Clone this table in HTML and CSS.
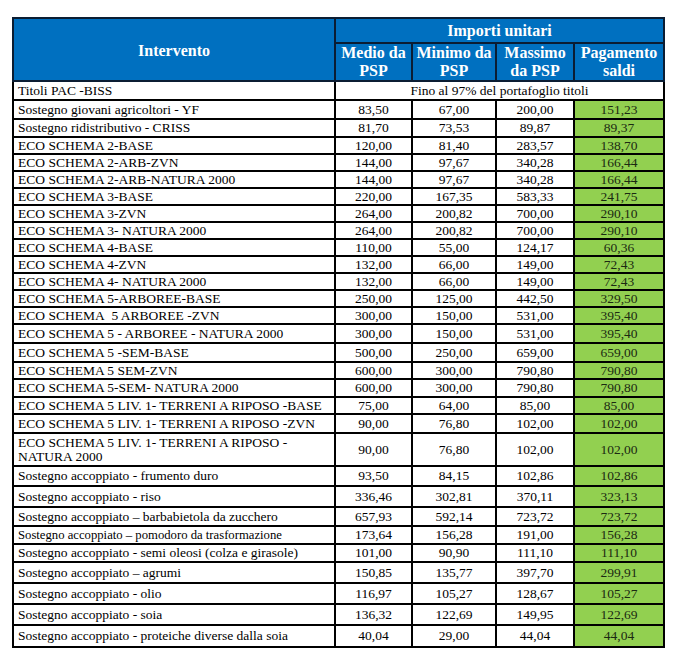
FILE: index.html
```html
<!DOCTYPE html>
<html lang="it">
<head>
<meta charset="utf-8">
<title>Importi unitari</title>
<link rel="stylesheet" href="styles.css">
</head>
<body>
<div class="page">
<table class="tbl">
  <colgroup>
    <col class="c-int"><col class="c-med"><col class="c-min"><col class="c-max"><col class="c-pag">
  </colgroup>
  <thead>
    <tr class="h-top">
      <th rowspan="2" class="th-int">Intervento</th>
      <th colspan="4">Importi unitari</th>
    </tr>
    <tr class="h-sub">
      <th>Medio da<br>PSP</th>
      <th>Minimo da<br>PSP</th>
      <th>Massimo<br>da PSP</th>
      <th>Pagamento<br>saldi</th>
    </tr>
  </thead>
  <tbody>
    <tr class="r19"><td class="name">Titoli PAC -BISS</td><td colspan="4" class="num">Fino al 97% del portafoglio titoli</td></tr>
    <tr class="r19"><td class="name">Sostegno giovani agricoltori - YF</td><td class="num">83,50</td><td class="num">67,00</td><td class="num">200,00</td><td class="pay">151,23</td></tr>
    <tr class="r18"><td class="name">Sostegno ridistributivo - CRISS</td><td class="num">81,70</td><td class="num">73,53</td><td class="num">89,87</td><td class="pay">89,37</td></tr>
    <tr class="r17"><td class="name">ECO SCHEMA 2-BASE</td><td class="num">120,00</td><td class="num">81,40</td><td class="num">283,57</td><td class="pay">138,70</td></tr>
    <tr class="r17"><td class="name">ECO SCHEMA 2-ARB-ZVN</td><td class="num">144,00</td><td class="num">97,67</td><td class="num">340,28</td><td class="pay">166,44</td></tr>
    <tr class="r17"><td class="name">ECO SCHEMA 2-ARB-NATURA 2000</td><td class="num">144,00</td><td class="num">97,67</td><td class="num">340,28</td><td class="pay">166,44</td></tr>
    <tr class="r17"><td class="name">ECO SCHEMA 3-BASE</td><td class="num">220,00</td><td class="num">167,35</td><td class="num">583,33</td><td class="pay">241,75</td></tr>
    <tr class="r17"><td class="name">ECO SCHEMA 3-ZVN</td><td class="num">264,00</td><td class="num">200,82</td><td class="num">700,00</td><td class="pay">290,10</td></tr>
    <tr class="r17"><td class="name">ECO SCHEMA 3- NATURA 2000</td><td class="num">264,00</td><td class="num">200,82</td><td class="num">700,00</td><td class="pay">290,10</td></tr>
    <tr class="r17"><td class="name">ECO SCHEMA 4-BASE</td><td class="num">110,00</td><td class="num">55,00</td><td class="num">124,17</td><td class="pay">60,36</td></tr>
    <tr class="r17"><td class="name">ECO SCHEMA 4-ZVN</td><td class="num">132,00</td><td class="num">66,00</td><td class="num">149,00</td><td class="pay">72,43</td></tr>
    <tr class="r17"><td class="name">ECO SCHEMA 4- NATURA 2000</td><td class="num">132,00</td><td class="num">66,00</td><td class="num">149,00</td><td class="pay">72,43</td></tr>
    <tr class="r17"><td class="name">ECO SCHEMA 5-ARBOREE-BASE</td><td class="num">250,00</td><td class="num">125,00</td><td class="num">442,50</td><td class="pay">329,50</td></tr>
    <tr class="r17"><td class="name">ECO SCHEMA&nbsp; 5 ARBOREE -ZVN</td><td class="num">300,00</td><td class="num">150,00</td><td class="num">531,00</td><td class="pay">395,40</td></tr>
    <tr class="r19"><td class="name">ECO SCHEMA 5 - ARBOREE - NATURA 2000</td><td class="num">300,00</td><td class="num">150,00</td><td class="num">531,00</td><td class="pay">395,40</td></tr>
    <tr class="r19"><td class="name">ECO SCHEMA 5 -SEM-BASE</td><td class="num">500,00</td><td class="num">250,00</td><td class="num">659,00</td><td class="pay">659,00</td></tr>
    <tr class="r17"><td class="name">ECO SCHEMA 5 SEM-ZVN</td><td class="num">600,00</td><td class="num">300,00</td><td class="num">790,80</td><td class="pay">790,80</td></tr>
    <tr class="r18"><td class="name">ECO SCHEMA 5-SEM- NATURA 2000</td><td class="num">600,00</td><td class="num">300,00</td><td class="num">790,80</td><td class="pay">790,80</td></tr>
    <tr class="r17"><td class="name">ECO SCHEMA 5 LIV. 1- TERRENI A RIPOSO -BASE</td><td class="num">75,00</td><td class="num">64,00</td><td class="num">85,00</td><td class="pay">85,00</td></tr>
    <tr class="r19"><td class="name">ECO SCHEMA 5 LIV. 1- TERRENI A RIPOSO -ZVN</td><td class="num">90,00</td><td class="num">76,80</td><td class="num">102,00</td><td class="pay">102,00</td></tr>
    <tr class="r33"><td class="name">ECO SCHEMA 5 LIV. 1- TERRENI A RIPOSO -<br>NATURA 2000</td><td class="num">90,00</td><td class="num">76,80</td><td class="num">102,00</td><td class="pay">102,00</td></tr>
    <tr class="r20"><td class="name">Sostegno accoppiato - frumento duro</td><td class="num">93,50</td><td class="num">84,15</td><td class="num">102,86</td><td class="pay">102,86</td></tr>
    <tr class="r21"><td class="name">Sostegno accoppiato - riso</td><td class="num">336,46</td><td class="num">302,81</td><td class="num">370,11</td><td class="pay">323,13</td></tr>
    <tr class="r19"><td class="name">Sostegno accoppiato – barbabietola da zucchero</td><td class="num">657,93</td><td class="num">592,14</td><td class="num">723,72</td><td class="pay">723,72</td></tr>
    <tr class="r18"><td class="name small">Sostegno accoppiato – pomodoro da trasformazione</td><td class="num">173,64</td><td class="num">156,28</td><td class="num">191,00</td><td class="pay">156,28</td></tr>
    <tr class="r18"><td class="name">Sostegno accoppiato - semi oleosi (colza e girasole)</td><td class="num">101,00</td><td class="num">90,90</td><td class="num">111,10</td><td class="pay">111,10</td></tr>
    <tr class="r21"><td class="name">Sostegno accoppiato – agrumi</td><td class="num">150,85</td><td class="num">135,77</td><td class="num">397,70</td><td class="pay">299,91</td></tr>
    <tr class="r21"><td class="name">Sostegno accoppiato - olio</td><td class="num">116,97</td><td class="num">105,27</td><td class="num">128,67</td><td class="pay">105,27</td></tr>
    <tr class="r21"><td class="name">Sostegno accoppiato - soia</td><td class="num">136,32</td><td class="num">122,69</td><td class="num">149,95</td><td class="pay">122,69</td></tr>
    <tr class="r22"><td class="name">Sostegno accoppiato - proteiche diverse dalla soia</td><td class="num">40,04</td><td class="num">29,00</td><td class="num">44,04</td><td class="pay">44,04</td></tr>
  </tbody>
</table>
</div>
</body>
</html>
```

FILE: styles.css
```css
html, body {
  margin: 0;
  padding: 0;
  background: #ffffff;
}

.page {
  padding: 17px 0 0 12px;
}

.tbl {
  border-collapse: collapse;
  table-layout: fixed;
  width: 653px;
  font-family: "Liberation Serif", "Times New Roman", serif;
  color: #000;
  border: 2px solid #000;
}

.c-int { width: 322px; }
.c-med { width: 77px; }
.c-min { width: 84px; }
.c-max { width: 78px; }
.c-pag { width: 90px; }

.tbl th {
  background: #0070c0;
  color: #ffffff;
  font-weight: bold;
  font-size: 16px;
  line-height: 18px;
  border: 2px solid #0b1d33;
  padding: 0;
  text-align: center;
  vertical-align: middle;
}

.tbl th.th-int {
  padding-top: 3px;
}

.h-top th {
  height: 23px;
}

.h-sub th {
  height: 35px;
}

.tbl td {
  border: 2px solid #000;
  padding: 0;
  font-size: 13.5px;
  line-height: 14px;
  vertical-align: middle;
  white-space: nowrap;
}

.tbl td.name {
  padding-left: 4px;
  text-align: left;
}

.tbl td.small {
  font-size: 12.7px;
}

.tbl td.num {
  text-align: center;
}

.tbl td.pay {
  text-align: center;
  background: #92d050;
  color: #1b2a12;
}

.r17 td { height: 15px; }
.r18 td { height: 16px; }
.r19 td { height: 17px; }
.r20 td { height: 18px; }
.r21 td { height: 19px; }
.r22 td { height: 20px; }
.r33 td { height: 31px; }
```
